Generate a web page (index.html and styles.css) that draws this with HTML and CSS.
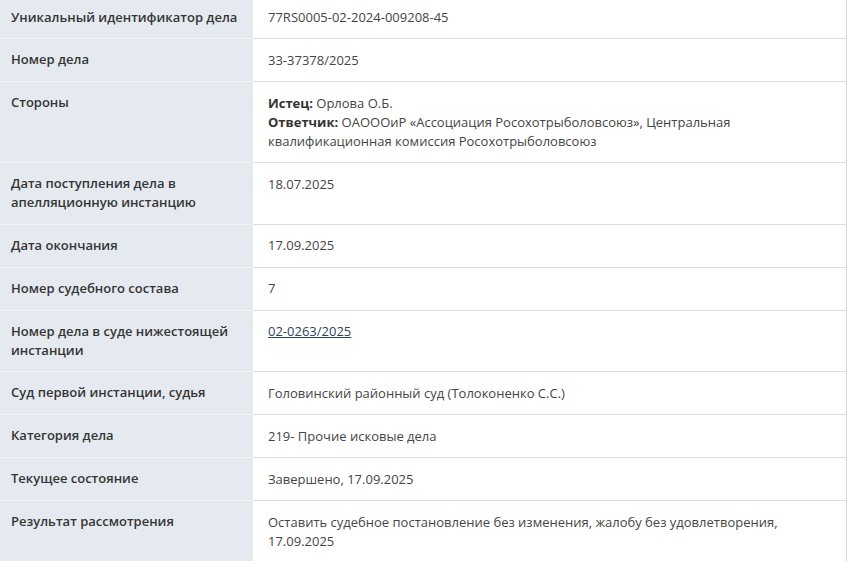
FILE: index.html
```html
<!DOCTYPE html>
<html lang="ru">
<head>
<meta charset="utf-8">
<title>Карточка дела</title>
<link rel="stylesheet" href="styles.css">
</head>
<body>
<table class="case">
  <colgroup><col class="c-label"><col class="c-value"></colgroup>
  <tr class="first"><th>Уникальный идентификатор дела</th><td>77RS0005-02-2024-009208-45</td></tr>
  <tr><th>Номер дела</th><td>33-37378/2025</td></tr>
  <tr><th>Стороны</th><td><b>Истец:</b> Орлова О.Б.<br><b>Ответчик:</b> ОАОООиР «Ассоциация Росохотрыболовсоюз», Центральная квалификационная комиссия Росохотрыболовсоюз</td></tr>
  <tr><th>Дата поступления дела в апелляционную инстанцию</th><td>18.07.2025</td></tr>
  <tr><th>Дата окончания</th><td>17.09.2025</td></tr>
  <tr><th>Номер судебного состава</th><td>7</td></tr>
  <tr><th>Номер дела в суде нижестоящей инстанции</th><td><a href="#">02-0263/2025</a></td></tr>
  <tr><th>Суд первой инстанции, судья</th><td>Головинский районный суд (Толоконенко С.С.)</td></tr>
  <tr><th>Категория дела</th><td>219- Прочие исковые дела</td></tr>
  <tr><th>Текущее состояние</th><td>Завершено, 17.09.2025</td></tr>
  <tr class="last"><th>Результат рассмотрения</th><td>Оставить судебное постановление без изменения, жалобу без удовлетворения, 17.09.2025</td></tr>
</table>
</body>
</html>
```
FILE: styles.css
```css
html, body {
  margin: 0;
  padding: 0;
  background: #fff;
}
body {
  font-family: "Open Sans", "Liberation Sans", sans-serif;
  font-size: 13px;
  color: #3a3a3a;
}
.case {
  width: 847px;
  table-layout: fixed;
  border-collapse: collapse;
  border-right: 1px solid #d6d9dc;
}
.c-label { width: 253px; }
.case th,
.case td {
  vertical-align: top;
  line-height: 19.5px;
  padding: 11px 15px 11.5px;
  border-top: 1px solid #d9dde1;
  text-align: left;
}
.case th {
  line-height: 19px;
  padding-left: 11px;
  padding-right: 4px;
  background: #e5eaf0;
  font-weight: 600;
  color: #353535;
  border-top-color: #f1f4f7;
}
.case td {
  line-height: 19px;
  padding-top: 11.5px;
  padding-right: 60px;
  color: #454545;
}
.case td b {
  font-weight: 700;
  color: #333;
}
.case a {
  color: #2d4557;
  text-decoration: underline;
}
.case tr.first th,
.case tr.first td {
  border-top: none;
  padding-top: 7.5px;
}
.case tr.last th,
.case tr.last td {
  padding-bottom: 10px;
}
```
